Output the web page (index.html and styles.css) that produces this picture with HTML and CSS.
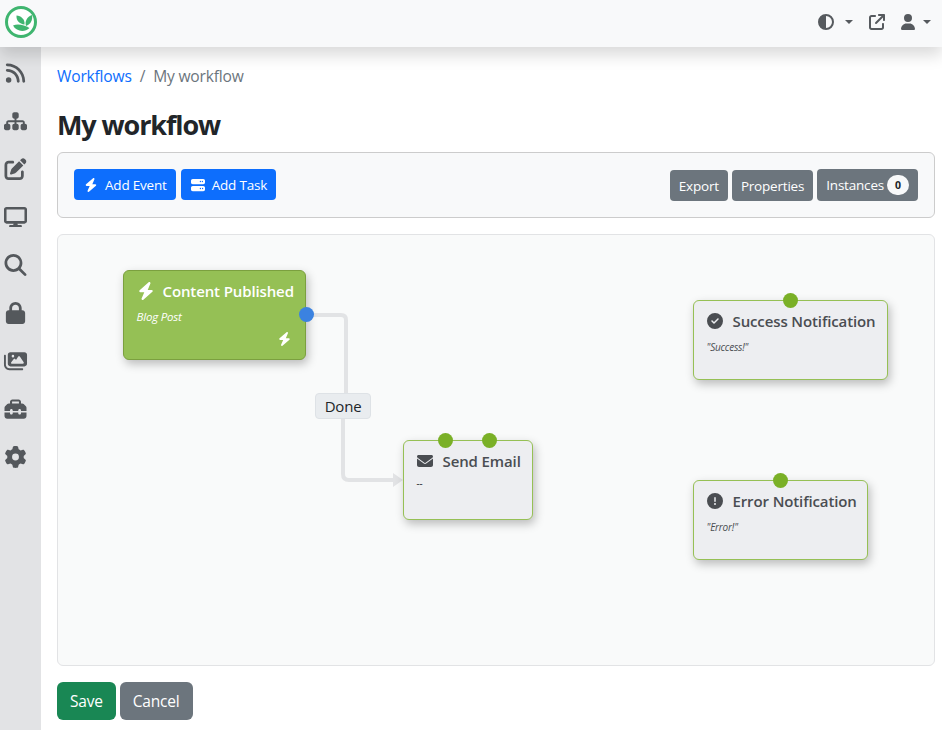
FILE: index.html
```html
<!DOCTYPE html>
<html lang="en">
<head>
    <meta charset="UTF-8">
    <meta name="viewport" content="width=device-width, initial-scale=1.0">
    <title>My workflow</title>
    <link rel="stylesheet" href="styles.css">
</head>
<body>
    <svg class="sprites" xmlns="http://www.w3.org/2000/svg">
        <symbol id="i-rss" viewBox="0 0 448 512"><path d="M0 64C0 46.3 14.3 32 32 32c229.8 0 416 186.2 416 416c0 17.7-14.3 32-32 32s-32-14.3-32-32C384 253.6 226.4 96 32 96C14.3 96 0 81.7 0 64zM0 416a64 64 0 1 1 128 0A64 64 0 1 1 0 416zM32 160c159.1 0 288 128.9 288 288c0 17.7-14.3 32-32 32s-32-14.3-32-32c0-123.7-100.3-224-224-224c-17.7 0-32-14.3-32-32s14.3-32 32-32z"/></symbol>
        <symbol id="i-sitemap" viewBox="0 0 576 512"><path d="M208 80c0-26.5 21.5-48 48-48h64c26.5 0 48 21.5 48 48v64c0 26.5-21.5 48-48 48h-8v40H464c30.9 0 56 25.1 56 56v32h8c26.5 0 48 21.5 48 48v64c0 26.5-21.5 48-48 48H464c-26.5 0-48-21.5-48-48V368c0-26.5 21.5-48 48-48h8V288c0-4.4-3.6-8-8-8H312v40h8c26.5 0 48 21.5 48 48v64c0 26.5-21.5 48-48 48H256c-26.5 0-48-21.5-48-48V368c0-26.5 21.5-48 48-48h8V280H112c-4.4 0-8 3.6-8 8v32h8c26.5 0 48 21.5 48 48v64c0 26.5-21.5 48-48 48H48c-26.5 0-48-21.5-48-48V368c0-26.5 21.5-48 48-48h8V288c0-30.9 25.1-56 56-56H264V192h-8c-26.5 0-48-21.5-48-48V80z"/></symbol>
        <symbol id="i-edit" viewBox="0 0 512 512"><path d="M471.6 21.7c-21.9-21.9-57.3-21.9-79.2 0L362.3 51.7l97.9 97.9 30.1-30.1c21.9-21.9 21.9-57.3 0-79.2L471.6 21.7zm-299.2 220c-6.1 6.1-10.8 13.6-13.5 21.9l-29.6 88.8c-2.9 8.6-.6 18.1 5.8 24.6s15.9 8.7 24.6 5.8l88.8-29.6c8.2-2.7 15.7-7.4 21.9-13.5L437.7 172.3 339.7 74.3 172.4 241.7zM96 64C43 64 0 107 0 160V416c0 53 43 96 96 96H352c53 0 96-43 96-96V320c0-17.7-14.3-32-32-32s-32 14.3-32 32v96c0 17.7-14.3 32-32 32H96c-17.7 0-32-14.3-32-32V160c0-17.7 14.3-32 32-32h96c17.7 0 32-14.3 32-32s-14.3-32-32-32H96z"/></symbol>
        <symbol id="i-desktop" viewBox="0 0 576 512"><path d="M64 0C28.7 0 0 28.7 0 64V352c0 35.3 28.7 64 64 64H240l-10.7 32H160c-17.7 0-32 14.3-32 32s14.3 32 32 32H416c17.7 0 32-14.3 32-32s-14.3-32-32-32H346.7L336 416H512c35.3 0 64-28.7 64-64V64c0-35.3-28.7-64-64-64H64zM512 64V352H64V64H512z"/></symbol>
        <symbol id="i-search" viewBox="0 0 512 512"><path d="M416 208c0 45.9-14.9 88.3-40 122.7L502.6 457.4c12.5 12.5 12.5 32.8 0 45.3s-32.8 12.5-45.3 0L330.7 376c-34.4 25.2-76.8 40-122.7 40C93.1 416 0 322.9 0 208S93.1 0 208 0S416 93.1 416 208zM208 352a144 144 0 1 0 0-288 144 144 0 1 0 0 288z"/></symbol>
        <symbol id="i-lock" viewBox="0 0 448 512"><path d="M144 144v48H304V144c0-44.2-35.8-80-80-80s-80 35.8-80 80zM80 192V144C80 64.5 144.5 0 224 0s144 64.5 144 144v48h16c35.3 0 64 28.7 64 64V448c0 35.3-28.7 64-64 64H64c-35.3 0-64-28.7-64-64V256c0-35.3 28.7-64 64-64H80z"/></symbol>
        <symbol id="i-images" viewBox="0 0 576 512"><path d="M160 32c-35.3 0-64 28.7-64 64V320c0 35.3 28.7 64 64 64H512c35.3 0 64-28.7 64-64V96c0-35.3-28.7-64-64-64H160zM396 138.7l96 144c4.9 7.4 5.4 16.8 1.2 24.6S480.9 320 472 320H328 280 200c-9.2 0-17.6-5.3-21.6-13.6s-2.9-18.2 2.9-25.4l64-80c4.6-5.7 11.4-9 18.7-9s14.2 3.3 18.7 9l17.3 21.6 56-84C360.5 132 368 128 376 128s15.5 4 20 10.7zM192 128a32 32 0 1 1 64 0 32 32 0 1 1 -64 0zM48 120c0-13.3-10.7-24-24-24S0 106.7 0 120V344c0 75.1 60.9 136 136 136H456c13.3 0 24-10.7 24-24s-10.7-24-24-24H136c-48.6 0-88-39.4-88-88V120z"/></symbol>
        <symbol id="i-toolbox" viewBox="0 0 512 512"><path d="M176 88v40H336V88c0-4.4-3.6-8-8-8H184c-4.4 0-8 3.6-8 8zm-48 40V88c0-30.9 25.1-56 56-56H328c30.9 0 56 25.1 56 56v40h28.1c12.7 0 24.9 5.1 33.9 14.1l51.9 51.9c9 9 14.1 21.2 14.1 33.9V304H384V288c0-17.7-14.3-32-32-32s-32 14.3-32 32v16H192V288c0-17.7-14.3-32-32-32s-32 14.3-32 32v16H0V227.9c0-12.7 5.1-24.9 14.1-33.9l51.9-51.9c9-9 21.2-14.1 33.9-14.1H128zM0 416V336H128v16c0 17.7 14.3 32 32 32s32-14.3 32-32V336H320v16c0 17.7 14.3 32 32 32s32-14.3 32-32V336H512v80c0 35.3-28.7 64-64 64H64c-35.3 0-64-28.7-64-64z"/></symbol>
        <symbol id="i-gear" viewBox="0 0 512 512"><path d="M495.9 166.6c3.2 8.7 .5 18.4-6.4 24.6l-43.3 39.4c1.1 8.3 1.7 16.8 1.7 25.4s-.6 17.1-1.7 25.4l43.3 39.4c6.9 6.2 9.6 15.9 6.4 24.6c-4.4 11.9-9.7 23.3-15.8 34.3l-4.7 8.1c-6.6 11-14 21.4-22.1 31.2c-5.9 7.2-15.7 9.6-24.5 6.8l-55.7-17.7c-13.4 10.3-28.2 18.9-44 25.4l-12.5 57.1c-2 9.1-9 16.3-18.2 17.8c-13.8 2.3-28 3.5-42.5 3.5s-28.7-1.2-42.5-3.5c-9.2-1.5-16.2-8.7-18.2-17.8l-12.5-57.1c-15.8-6.5-30.6-15.1-44-25.4L83.1 425.9c-8.8 2.8-18.6 .3-24.5-6.8c-8.1-9.8-15.5-20.2-22.1-31.2l-4.7-8.1c-6.1-11-11.4-22.4-15.8-34.3c-3.2-8.7-.5-18.4 6.4-24.6l43.3-39.4C64.6 273.1 64 264.6 64 256s.6-17.1 1.7-25.4L22.4 191.2c-6.9-6.2-9.6-15.9-6.4-24.6c4.4-11.9 9.7-23.3 15.8-34.3l4.7-8.1c6.6-11 14-21.4 22.1-31.2c5.9-7.2 15.7-9.6 24.5-6.8l55.7 17.7c13.4-10.3 28.2-18.9 44-25.4l12.5-57.1c2-9.1 9-16.3 18.2-17.8C227.3 1.2 241.5 0 256 0s28.7 1.2 42.5 3.5c9.2 1.5 16.2 8.7 18.2 17.8l12.5 57.1c15.8 6.5 30.6 15.1 44 25.4l55.7-17.7c8.8-2.8 18.6-.3 24.5 6.8c8.1 9.8 15.5 20.2 22.1 31.2l4.7 8.1c6.1 11 11.4 22.4 15.8 34.3zM256 336a80 80 0 1 0 0-160 80 80 0 1 0 0 160z"/></symbol>
        <symbol id="i-bolt" viewBox="0 0 448 512"><path d="M349.4 44.6c5.9-13.7 1.5-29.7-10.6-38.5s-28.6-8-39.9 1.8l-256 224c-10 8.8-13.6 22.9-8.9 35.3S50.7 288 64 288H175.5L98.6 467.4c-5.9 13.7-1.5 29.7 10.6 38.5s28.6 8 39.9-1.8l256-224c10-8.8 13.6-22.9 8.9-35.3s-18.1-20.7-31.4-20.7H272.5L349.4 44.6z"/></symbol>
        <symbol id="i-server" viewBox="0 0 512 512"><path d="M64 32C28.7 32 0 60.7 0 96v64c0 35.3 28.7 64 64 64H448c35.3 0 64-28.7 64-64V96c0-35.3-28.7-64-64-64H64zm280 72a24 24 0 1 1 0 48 24 24 0 1 1 0-48zm48 24a24 24 0 1 1 48 0 24 24 0 1 1 -48 0zM64 288c-35.3 0-64 28.7-64 64v64c0 35.3 28.7 64 64 64H448c35.3 0 64-28.7 64-64V352c0-35.3-28.7-64-64-64H64zm280 72a24 24 0 1 1 0 48 24 24 0 1 1 0-48zm56 24a24 24 0 1 1 48 0 24 24 0 1 1 -48 0z"/></symbol>
        <symbol id="i-envelope" viewBox="0 0 512 512"><path d="M48 64C21.5 64 0 85.5 0 112c0 15.1 7.1 29.3 19.2 38.4L236.8 313.6c11.4 8.5 27 8.5 38.4 0L492.8 150.4c12.1-9.1 19.2-23.3 19.2-38.4c0-26.5-21.5-48-48-48H48zM0 176V384c0 35.3 28.7 64 64 64H448c35.3 0 64-28.7 64-64V176L294.4 339.2c-22.8 17.1-52 17.1-76.8 0L0 176z"/></symbol>
        <symbol id="i-check" viewBox="0 0 512 512"><path d="M256 512A256 256 0 1 0 256 0a256 256 0 1 0 0 512zM369 209L241 337c-9.4 9.4-24.6 9.4-33.9 0l-64-64c-9.4-9.4-9.4-24.6 0-33.9s24.6-9.4 33.9 0l47 47L335 175c9.4-9.4 24.6-9.4 33.9 0s9.4 24.6 0 33.9z"/></symbol>
        <symbol id="i-alert" viewBox="0 0 512 512"><path d="M256 512A256 256 0 1 0 256 0a256 256 0 1 0 0 512zm0-384c13.3 0 24 10.7 24 24V264c0 13.3-10.7 24-24 24s-24-10.7-24-24V152c0-13.3 10.7-24 24-24zM224 352a32 32 0 1 1 64 0 32 32 0 1 1 -64 0z"/></symbol>
        <symbol id="i-contrast" viewBox="0 0 512 512"><path fill-rule="evenodd" d="M0 256a256 256 0 1 0 512 0a256 256 0 1 0-512 0zM256 64a192 192 0 0 1 0 384z"/></symbol>
        <symbol id="i-external" viewBox="0 0 512 512"><path d="M320 0c-17.7 0-32 14.3-32 32s14.3 32 32 32h82.7L201.4 265.4c-12.5 12.5-12.5 32.8 0 45.3s32.8 12.5 45.3 0L448 109.3V192c0 17.7 14.3 32 32 32s32-14.3 32-32V32c0-17.7-14.3-32-32-32H320zM80 32C35.8 32 0 67.8 0 112V432c0 44.2 35.8 80 80 80H400c44.2 0 80-35.8 80-80V320c0-17.7-14.3-32-32-32s-32 14.3-32 32V432c0 8.8-7.2 16-16 16H80c-8.8 0-16-7.2-16-16V112c0-8.8 7.2-16 16-16H192c17.7 0 32-14.3 32-32s-14.3-32-32-32H80z"/></symbol>
        <symbol id="i-user" viewBox="0 0 448 512"><path d="M224 256A128 128 0 1 0 224 0a128 128 0 1 0 0 256zm-45.7 48C79.8 304 0 383.8 0 482.3C0 498.7 13.3 512 29.7 512H418.3c16.4 0 29.7-13.3 29.7-29.7C448 383.8 368.2 304 269.7 304H178.3z"/></symbol>
    </svg>

    <nav class="navbar">
        <svg class="logo" viewBox="0 0 34 34">
            <circle cx="17" cy="17" r="14.5" fill="#fff" stroke="#3fb56f" stroke-width="3"/>
            <path fill="#3fb56f" d="M12.500 10.500C17 11 21 14 20.500 19.500C15.500 19 12 15.500 12.500 10.500z"/>
            <path fill="#3fb56f" d="M28 10C29 15 26.500 19.500 22 21C20.500 16.500 23 11.500 28 10z"/>
            <path fill="#3fb56f" d="M9 20.500C14 18.500 20 20 25.500 23C21 27.500 12.500 27 9 20.500z"/>
        </svg>
        <div class="nav_right">
            <a class="nav_item nav_theme" href="#"><svg class="nav_icon"><use href="#i-contrast"/></svg><span class="caret"></span></a>
            <a class="nav_item" href="#"><svg class="nav_icon"><use href="#i-external"/></svg></a>
            <a class="nav_item" href="#"><svg class="nav_icon"><use href="#i-user"/></svg><span class="caret"></span></a>
        </div>
    </nav>

    <div class="layout">
        <aside class="sidebar">
            <a class="side_item" href="#"><svg><use href="#i-rss"/></svg></a>
            <a class="side_item side_wide" href="#"><svg><use href="#i-sitemap"/></svg></a>
            <a class="side_item" href="#"><svg><use href="#i-edit"/></svg></a>
            <a class="side_item side_wide" href="#"><svg><use href="#i-desktop"/></svg></a>
            <a class="side_item" href="#"><svg><use href="#i-search"/></svg></a>
            <a class="side_item" href="#"><svg><use href="#i-lock"/></svg></a>
            <a class="side_item side_wide" href="#"><svg><use href="#i-images"/></svg></a>
            <a class="side_item" href="#"><svg><use href="#i-toolbox"/></svg></a>
            <a class="side_item" href="#"><svg><use href="#i-gear"/></svg></a>
        </aside>

        <main class="content">
            <div class="breadcrumb">
                <a href="#">Workflows</a>
                <span class="sep">/</span>
                <span class="current">My workflow</span>
            </div>
            <h1>My workflow</h1>

            <div class="toolbar">
                <div class="toolbar_left">
                    <button class="btn btn_blue"><svg class="btn_icon"><use href="#i-bolt"/></svg>Add Event</button>
                    <button class="btn btn_blue"><svg class="btn_icon"><use href="#i-server"/></svg>Add Task</button>
                </div>
                <div class="toolbar_right">
                    <button class="btn btn_gray">Export</button>
                    <button class="btn btn_gray">Properties</button>
                    <button class="btn btn_gray btn_instances">Instances <span class="badge">0</span></button>
                </div>
            </div>

            <div class="canvas">
                <svg class="edges" width="876" height="430">
                    <path d="M249 80H283Q288 80 288 85V160M285 180V239Q285 245 291 245H338" fill="none" stroke="#e2e3e5" stroke-width="4"/>
                    <path d="M335 238L345 245L335 252Z" fill="#e2e3e5"/>
                </svg>

                <div class="node node_event">
                    <div class="node_title"><svg><use href="#i-bolt"/></svg>Content Published</div>
                    <div class="node_text">Blog Post</div>
                    <svg class="node_corner"><use href="#i-bolt"/></svg>
                    <span class="dot dot_out"></span>
                </div>

                <div class="edge_label">Done</div>

                <div class="node node_email">
                    <div class="node_title"><svg><use href="#i-envelope"/></svg>Send Email</div>
                    <div class="node_text">--</div>
                    <span class="dot dot_a"></span>
                    <span class="dot dot_b"></span>
                </div>

                <div class="node node_success">
                    <div class="node_title"><svg><use href="#i-check"/></svg>Success Notification</div>
                    <div class="node_text">"Success!"</div>
                    <span class="dot dot_mid"></span>
                </div>

                <div class="node node_error">
                    <div class="node_title"><svg><use href="#i-alert"/></svg>Error Notification</div>
                    <div class="node_text">"Error!"</div>
                    <span class="dot dot_mid"></span>
                </div>
            </div>

            <div class="actions">
                <button class="btn btn_big btn_green">Save</button>
                <button class="btn btn_big btn_gray">Cancel</button>
            </div>
        </main>
    </div>
</body>
</html>
```

FILE: styles.css
```css
* {
    box-sizing: border-box;
}

html,
body {
    height: 100%;
    margin: 0;
}

body {
    display: flex;
    flex-direction: column;
    overflow: hidden;
    font-family: "Open Sans", "Noto Sans", sans-serif;
    font-size: 15px;
    letter-spacing: -0.2px;
    color: #212529;
    background-color: #fff;
}

.sprites {
    display: none;
}

.navbar {
    position: relative;
    z-index: 2;
    display: flex;
    flex: none;
    justify-content: space-between;
    align-items: center;
    height: 47px;
    padding: 0 11px 3px 4px;
    background-color: #f8f9fa;
    box-shadow: 0 8px 16px rgba(0, 0, 0, 0.15);
}

.logo {
    width: 34px;
    height: 34px;
}

.nav_right {
    display: flex;
    align-items: center;
    gap: 15px;
}

.nav_item {
    display: flex;
    align-items: center;
    gap: 7px;
}

.nav_theme {
    gap: 11px;
    margin-right: 1px;
}

.nav_icon {
    width: 16px;
    height: 16px;
    fill: #565a5e;
}

.caret {
    width: 0;
    height: 0;
    border-top: 4px solid #565a5e;
    border-left: 4px solid transparent;
    border-right: 4px solid transparent;
}

.layout {
    display: flex;
    flex: 1;
    min-height: 0;
}

.sidebar {
    display: flex;
    flex-direction: column;
    flex: none;
    width: 41px;
    padding: 2px 0 0 2px;
    background-color: #e2e3e5;
}

.side_item {
    display: flex;
    align-items: center;
    height: 48px;
}

.side_item svg {
    width: 27px;
    height: 22px;
    fill: #54585c;
}

.side_wide svg {
    height: 20.5px;
}

.content {
    flex: 1;
    min-width: 0;
    padding: 16px 7px 0 16px;
}

.breadcrumb {
    display: flex;
    gap: 8px;
    height: 26px;
    align-items: center;
    font-size: 15.6px;
}

.breadcrumb a {
    color: #0d6efd;
    text-decoration: none;
}

.sep,
.current {
    color: #6c757d;
}

h1 {
    margin: 14px 0 5px;
    height: 44px;
    font-size: 27px;
    line-height: 44px;
    font-weight: 700;
    letter-spacing: -1.1px;
}

.toolbar {
    display: flex;
    justify-content: space-between;
    align-items: center;
    height: 66px;
    padding: 0 16px;
    background-color: #f8f9fa;
    border: 1px solid #ccc;
    border-radius: 6px;
}

.toolbar_left,
.toolbar_right {
    display: flex;
    align-items: flex-start;
    gap: 5px;
}

.toolbar_left {
    margin-bottom: 1px;
}

.toolbar_right {
    gap: 4px;
}

.btn {
    display: inline-flex;
    align-items: center;
    justify-content: center;
    height: 31px;
    padding: 0 9px;
    border: 0;
    border-radius: 4px;
    color: #fff;
    font-family: inherit;
    font-size: 13.5px;
    letter-spacing: -0.2px;
}

.btn_icon {
    width: 14px;
    height: 14px;
    margin: 0 7px 0 1px;
    fill: #fff;
}

.btn_blue {
    background-color: #0d6efd;
}

.btn_gray {
    background-color: #6c757d;
}

.btn_green {
    background-color: #198754;
}

.toolbar_right .btn {
    margin-top: 1px;
}

.toolbar_right .btn_instances {
    margin-top: 0;
    height: 32px;
}

.badge {
    display: inline-flex;
    align-items: center;
    justify-content: center;
    width: 22px;
    height: 20px;
    margin-left: 3px;
    border-radius: 10px;
    background-color: #f8f9fa;
    color: #212529;
    font-size: 10.5px;
    font-weight: 700;
}

.canvas {
    position: relative;
    height: 432px;
    margin-top: 16px;
    background-color: #f9fafa;
    border: 1px solid #e2e3e5;
    border-radius: 6px;
}

.edges {
    position: absolute;
    left: 0;
    top: 0;
}

.node {
    position: absolute;
    padding: 10px 12.5px;
    background-color: #edeef1;
    border: 1.5px solid #96c055;
    border-radius: 6px;
    box-shadow: 2px 4px 10px rgba(0, 0, 0, 0.25);
    color: #4a4d52;
}

.node_title {
    display: flex;
    align-items: center;
    font-size: 15px;
    font-weight: 600;
    letter-spacing: -0.12px;
    line-height: 20px;
    white-space: nowrap;
}

.node_title svg {
    flex: none;
    width: 16px;
    height: 16px;
    margin-right: 10px;
    fill: #4a4d52;
}

.node_text {
    margin-top: 9px;
    font-size: 10px;
    font-style: italic;
    line-height: 14px;
}

.node_event {
    left: 65px;
    top: 35px;
    width: 183px;
    height: 90px;
    background-color: #95c055;
    border-color: #7ba03f;
    color: #fff;
}

.node_event .node_title svg {
    width: 18px;
    height: 18px;
    margin-right: 8px;
    fill: #fff;
}

.node_event .node_text {
    font-size: 11.5px;
}

.node_corner {
    position: absolute;
    right: 14px;
    bottom: 13px;
    width: 13px;
    height: 14px;
    fill: #fff;
}

.node_email {
    left: 345px;
    top: 205px;
    width: 130px;
    height: 80px;
}

.node_email .node_text {
    margin-top: 5px;
}

.node_success {
    left: 635px;
    top: 65px;
    width: 195px;
    height: 80px;
}

.node_error {
    left: 635px;
    top: 245px;
    width: 175px;
    height: 80px;
}

.dot {
    position: absolute;
    top: -8.5px;
    width: 15px;
    height: 15px;
    border-radius: 50%;
    background-color: #7ab027;
}

.dot_out {
    top: 36px;
    right: -8.5px;
    background-color: #3b82e0;
}

.dot_a {
    left: 34px;
}

.dot_b {
    left: 78px;
}

.node_success .dot_mid {
    left: 89px;
}

.node_error .dot_mid {
    left: 79px;
}

.edge_label {
    position: absolute;
    left: 257px;
    top: 158px;
    width: 56px;
    height: 26px;
    background-color: #e9ecef;
    border: 1px solid #dee2e6;
    border-radius: 4px;
    font-size: 15px;
    line-height: 24px;
    text-align: center;
}

.actions {
    display: flex;
    gap: 4px;
    margin-top: 16px;
}

.btn_big {
    height: 38px;
    padding: 0 13px;
    border-radius: 6px;
    font-size: 15.5px;
}
```
